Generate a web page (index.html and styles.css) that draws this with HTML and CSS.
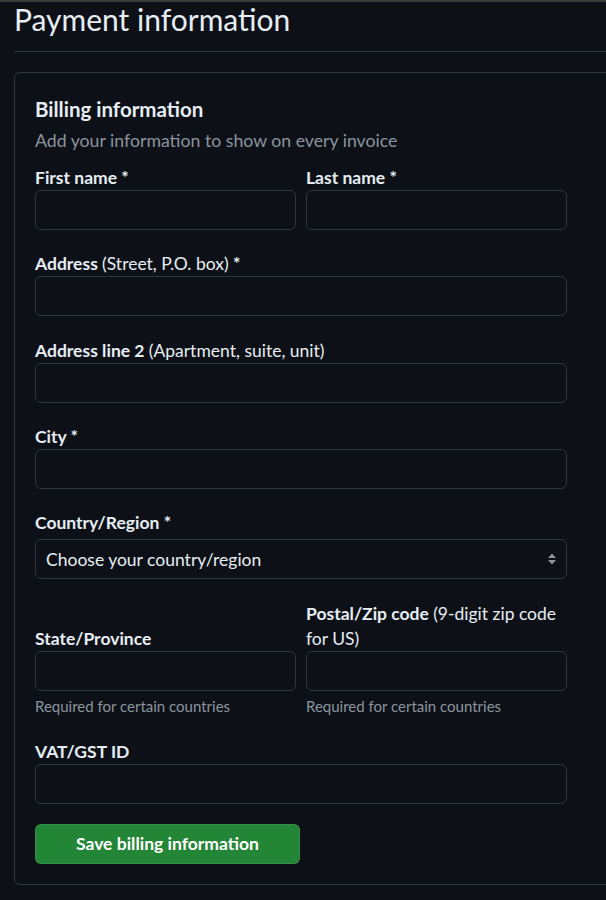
FILE: index.html
```html
<!DOCTYPE html>
<html lang="en">
<head>
<meta charset="utf-8">
<title>Payment information</title>
<link rel="stylesheet" href="styles.css">
</head>
<body>
<div class="topbar"></div>
<main class="page">
  <div class="subhead">
    <h2 class="subhead-heading">Payment information</h2>
  </div>
  <section class="box">
    <h3 class="box-title">Billing information</h3>
    <p class="box-desc">Add your information to show on every invoice</p>
    <form class="form">
      <div class="row two">
        <div class="field">
          <label class="label">First name *</label>
          <input class="input" type="text">
        </div>
        <div class="field">
          <label class="label">Last name *</label>
          <input class="input" type="text">
        </div>
      </div>
      <div class="row">
        <label class="label">Address <span class="light">(Street, P.O. box)</span> *</label>
        <input class="input" type="text">
      </div>
      <div class="row">
        <label class="label">Address line 2 <span class="light">(Apartment, suite, unit)</span></label>
        <input class="input" type="text">
      </div>
      <div class="row">
        <label class="label">City *</label>
        <input class="input" type="text">
      </div>
      <div class="row">
        <label class="label">Country/Region *</label>
        <div class="select-wrap">
          <select class="select">
            <option>Choose your country/region</option>
          </select>
          <svg class="select-arrow" width="10" height="14" viewBox="0 0 10 14" aria-hidden="true">
            <path d="M1 6 L5 1.5 L9 6 Z" fill="#8b949e"/>
            <path d="M1 8 L5 12.5 L9 8 Z" fill="#8b949e"/>
          </svg>
        </div>
      </div>
      <div class="row two bottom">
        <div class="field">
          <label class="label">State/Province</label>
          <input class="input" type="text">
          <p class="note">Required for certain countries</p>
        </div>
        <div class="field">
          <label class="label">Postal/Zip code <span class="light">(9-digit zip code for US)</span></label>
          <input class="input" type="text">
          <p class="note">Required for certain countries</p>
        </div>
      </div>
      <div class="row">
        <label class="label">VAT/GST ID</label>
        <input class="input" type="text">
      </div>
      <button class="btn" type="button">Save billing information</button>
    </form>
  </section>
</main>
</body>
</html>
```

FILE: styles.css
```css
* { box-sizing: border-box; }

html, body {
  margin: 0;
  padding: 0;
  background: #0d1117;
  overflow: hidden;
}

body {
  font-family: Lato, "Liberation Sans", sans-serif;
  color: #e6edf3;
  width: 606px;
  height: 900px;
}

.topbar {
  height: 2px;
  background: #3a3a3a;
}

.page {
  margin-left: 14px;
  width: 620px;
}

.subhead {
  border-bottom: 1px solid #30363d;
  padding-bottom: 15px;
}

.subhead-heading {
  margin: 0;
  font-size: 30px;
  font-weight: 400;
  line-height: 34px;
  color: #e6edf3;
}

.box {
  margin-top: 20px;
  border: 1px solid #30363d;
  border-radius: 6px;
  padding: 21px 20px 20px 20px;
}

.box-title {
  margin: 0;
  font-size: 20.5px;
  font-weight: 700;
  line-height: 30px;
}

.box-desc {
  margin: 4px 0 0;
  font-size: 17.7px;
  line-height: 25px;
  color: #8b949e;
}

.form {
  width: 532px;
  margin-top: 12px;
}

.row {
  margin-top: 21.33px;
  display: flex;
  flex-direction: column;
}

.row:first-child { margin-top: 0; }

.row.two {
  display: grid;
  grid-template-columns: 1fr 1fr;
  column-gap: 10px;
}

.row.two.bottom { align-items: end; }

.field {
  display: flex;
  flex-direction: column;
  justify-content: flex-end;
}

.label {
  display: block;
  font-size: 17.5px;
  line-height: 25px;
  font-weight: 700;
  color: #e6edf3;
}

.light { font-weight: 400; }

.input {
  display: block;
  width: 100%;
  height: 40px;
  margin: 0;
  background: #0d1117;
  border: 1px solid #30363d;
  border-radius: 6px;
  color: #e6edf3;
  font-family: inherit;
  font-size: 17.5px;
  padding: 0 12px;
  outline: none;
}

.select-wrap {
  position: relative;
  margin-top: 4px;
}

.select {
  display: block;
  width: 100%;
  height: 40px;
  margin: 0;
  appearance: none;
  -webkit-appearance: none;
  background: #0d1117;
  border: 1px solid #30363d;
  border-radius: 6px;
  color: #e6edf3;
  font-family: inherit;
  font-size: 17.5px;
  padding: 0 30px 0 10px;
  outline: none;
}

.select-arrow {
  position: absolute;
  right: 10px;
  top: 13px;
}

.note {
  margin: 4px 0 0;
  font-size: 15px;
  line-height: 23px;
  height: 23px;
  color: #8b949e;
}

.btn {
  display: block;
  margin-top: 20px;
  width: 265px;
  height: 40px;
  background: #238636;
  border: 1px solid rgba(240, 246, 252, 0.1);
  border-radius: 6px;
  color: #ffffff;
  font-family: inherit;
  font-size: 17.5px;
  font-weight: 700;
  padding: 0;
}
```
